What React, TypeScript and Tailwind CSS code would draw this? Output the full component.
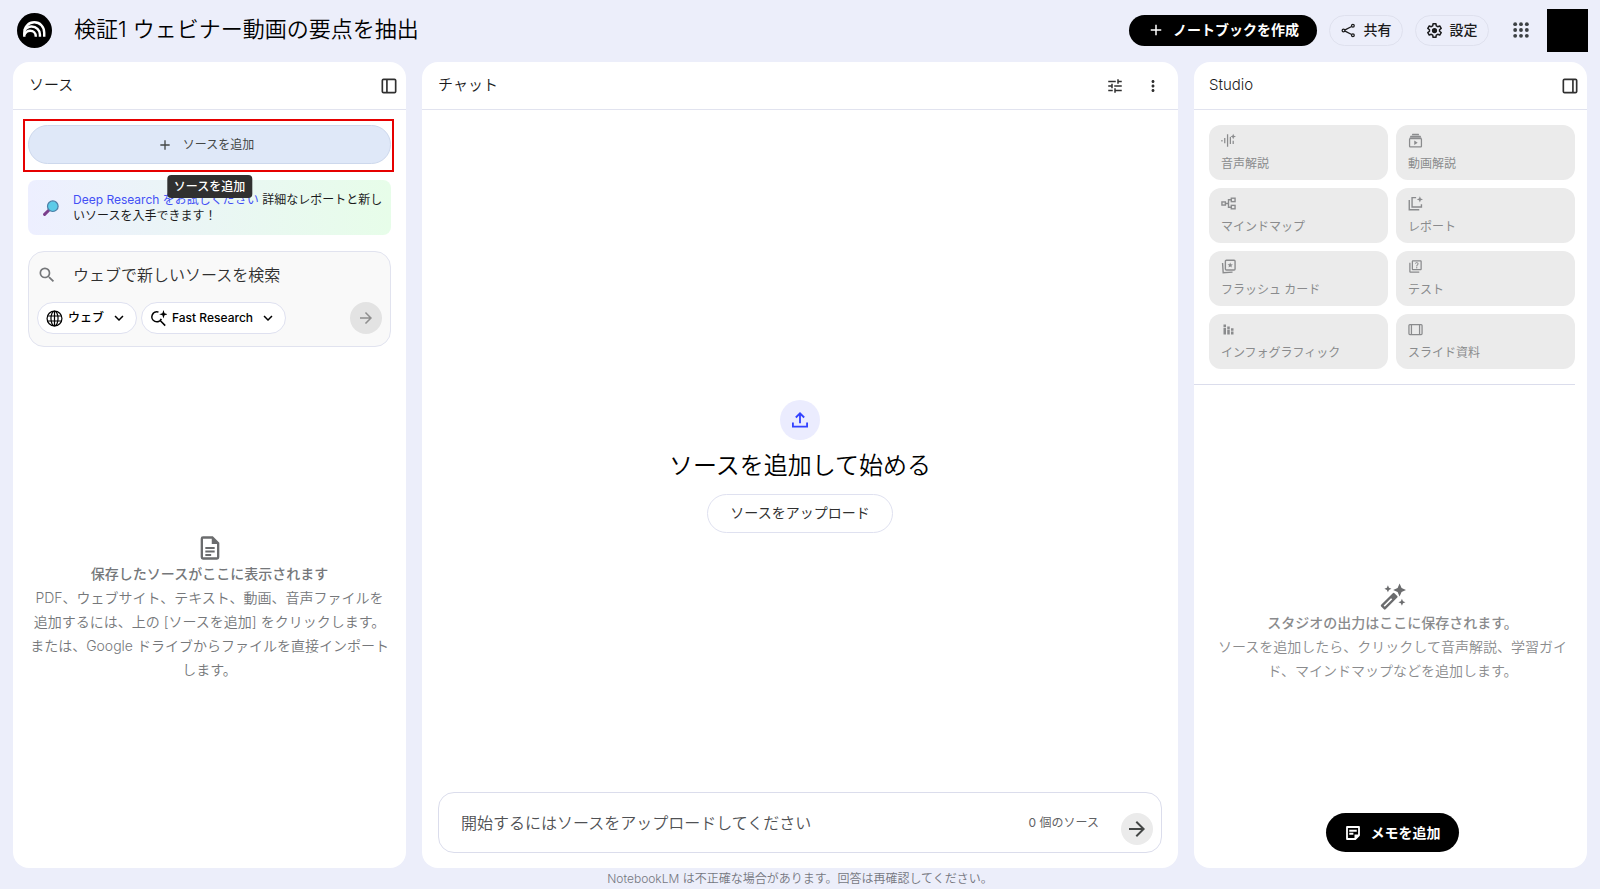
import React from 'react';
import {
  MdAdd,
  MdArrowForward,
  MdKeyboardArrowDown,
  MdMoreVert,
  MdOutlineQuiz,
  MdSearch,
  MdStackedBarChart,
  MdTune,
} from 'react-icons/md';

type IconProps = { className?: string };

const Logo: React.FC<IconProps> = ({ className }) => (
  <svg viewBox="0 0 36 36" className={className} aria-hidden="true">
    <circle cx="18" cy="18" r="18" fill="#000" />
    <g fill="none" stroke="#fff" strokeWidth="2.500">
      <path d="M7.500 24.500v-4.200C7.500 14 12 9.600 17.800 9.600S28 14 28 20.300v4.200" />
      <path d="M7.600 18.200C9.400 15.300 12.200 13.900 15 13.900c4.800 0 8.600 3.600 8.600 8.200v2.400" />
      <path d="M7.500 22.400c1.200-2.700 3.500-4.200 6-4.200 3.400 0 5.800 2.500 5.800 5.700v.6" />
    </g>
  </svg>
);

const ShareIcon: React.FC<IconProps> = ({ className }) => (
  <svg viewBox="0 0 24 24" className={className} fill="none" stroke="currentColor" strokeWidth="2" aria-hidden="true">
    <path d="M6.500 11 17 5.500M6.500 13 17 18.500" />
    <circle cx="19" cy="4.500" r="2.200" />
    <circle cx="4" cy="12" r="2.200" />
    <circle cx="19" cy="19.500" r="2.200" />
  </svg>
);

const SettingsIcon: React.FC<IconProps> = ({ className }) => (
  <svg viewBox="2 2 20 20" className={className} fill="none" stroke="currentColor" strokeWidth="2" strokeLinejoin="round" aria-hidden="true">
    <path d="M10.100 3h3.800l.5 2.800 1.900 1.100 2.700-1 1.900 3.300-2.200 1.800v2l2.200 1.800-1.900 3.300-2.700-1-1.900 1.100-.5 2.800h-3.800l-.5-2.800-1.900-1.100-2.700 1-1.900-3.300L5.300 13v-2L3.100 9.200 5 5.900l2.700 1 1.900-1.100z" />
    <circle cx="12" cy="12" r="2.500" fill="currentColor" />
  </svg>
);

const AppsIcon: React.FC<IconProps> = ({ className }) => (
  <svg viewBox="0 0 24 24" className={className} fill="currentColor" aria-hidden="true">
    {[5, 12, 19].map((y) => [5, 12, 19].map((x) => <circle key={`${x}-${y}`} cx={x} cy={y} r="2.300" />))}
  </svg>
);

const DockLeftIcon: React.FC<IconProps> = ({ className }) => (
  <svg viewBox="0 0 24 24" className={className} fill="none" stroke="currentColor" strokeWidth="2" aria-hidden="true">
    <rect x="4" y="4" width="16" height="16" rx="1.500" />
    <path d="M9.500 4v16" />
  </svg>
);

const DockRightIcon: React.FC<IconProps> = ({ className }) => (
  <svg viewBox="0 0 24 24" className={className} fill="none" stroke="currentColor" strokeWidth="2" aria-hidden="true">
    <rect x="4" y="4" width="16" height="16" rx="1.500" />
    <path d="M15.500 4v16" />
  </svg>
);

const LensIcon: React.FC<IconProps> = ({ className }) => (
  <svg viewBox="0 0 16 16" className={className} aria-hidden="true">
    <path d="M1.600 14.400 5.800 10.200" stroke="#7b3f8c" strokeWidth="3" strokeLinecap="round" />
    <circle cx="9.800" cy="6.200" r="5.300" fill="#5ccbe8" stroke="#4c7ea6" strokeWidth="1.200" />
  </svg>
);

const GlobeIcon: React.FC<IconProps> = ({ className }) => (
  <svg viewBox="0 0 24 24" className={className} fill="none" stroke="currentColor" strokeWidth="1.700" aria-hidden="true">
    <circle cx="12" cy="12" r="10.500" />
    <ellipse cx="12" cy="12" rx="5" ry="10.500" />
    <path d="M12 1.500v21M2.500 8.500h19M2.500 15.500h19" />
  </svg>
);

const SearchSparkIcon: React.FC<IconProps> = ({ className }) => (
  <svg viewBox="0 0 24 24" className={className} fill="none" stroke="currentColor" strokeWidth="2.200" aria-hidden="true">
    <path d="M12 3A7 7 0 1 0 16 12.500M14 14.500l7.500 7.500" />
    <path d="m19 0 1.500 4.500L25 6l-4.500 1.500L19 12l-1.500-4.500L13 6l4.500-1.500z" fill="currentColor" stroke="none" />
  </svg>
);

const FileIcon: React.FC<IconProps> = ({ className }) => (
  <svg viewBox="0 0 24 24" className={className} fill="none" stroke="currentColor" strokeWidth="2" aria-hidden="true">
    <path d="M14 3H6a1 1 0 0 0-1 1v16a1 1 0 0 0 1 1h12a1 1 0 0 0 1-1V8z" />
    <path d="M13.500 3v5.500H19z" fill="currentColor" stroke="none" />
    <path d="M8 12h8M8 15h8M8 18h5" strokeWidth="1.600" />
  </svg>
);

const UploadIcon: React.FC<IconProps> = ({ className }) => (
  <svg viewBox="0 0 24 24" className={className} fill="none" stroke="currentColor" strokeWidth="2.200" aria-hidden="true">
    <path d="M12 16V4.500M7 9l5-5 5 5M3.500 15v5h17v-5" />
  </svg>
);

const WandIcon: React.FC<IconProps> = ({ className }) => (
  <svg viewBox="0 0 24 24" className={className} fill="currentColor" aria-hidden="true">
    <path d="m3.400 19.400 10-10 2.400 2.400-10 10z" fill="none" stroke="currentColor" strokeWidth="2" strokeLinejoin="round" />
    <path d="m10.500 12.300 3.100-3.100 2.200 2.200-3.100 3.100z" />
    <path d="m18.500.5 1.700 3.800L24 6l-3.800 1.700-1.700 3.800-1.700-3.800L13 6l3.800-1.700z" />
    <path d="m8.500 2 .9 2.100 2.100.9-2.100.9-.9 2.100-.9-2.100L5.500 5l2.100-.9zM20.500 13.500l.9 2.100 2.100.9-2.100.9-.9 2.100-.9-2.100-2.100-.9 2.100-.9z" />
  </svg>
);

const NoteIcon: React.FC<IconProps> = ({ className }) => (
  <svg viewBox="0 0 24 24" className={className} fill="none" stroke="currentColor" strokeWidth="2.400" aria-hidden="true">
    <path d="M4 4h16v11l-5 5H4z" strokeLinejoin="round" />
    <path d="M7 9h10M7 13h5.500" />
    <path d="M14 21v-7h7z" fill="currentColor" stroke="none" />
  </svg>
);

const AudioIcon: React.FC<IconProps> = ({ className }) => (
  <svg viewBox="0 0 24 24" className={className} fill="none" stroke="currentColor" strokeWidth="2" aria-hidden="true">
    <path d="M1.500 11v2.500M6 8v8.500M10.500 2v20M15 6.500v11M19.500 12.500v5" />
    <path d="m19.500 1 1.300 3.200L24 5.500l-3.200 1.300-1.300 3.200-1.300-3.200L15 5.500l3.200-1.300z" fill="currentColor" stroke="none" />
  </svg>
);

const VideoIcon: React.FC<IconProps> = ({ className }) => (
  <svg viewBox="0 0 24 24" className={className} fill="none" stroke="currentColor" strokeWidth="2" aria-hidden="true">
    <rect x="2.500" y="9" width="19" height="13" rx="1" />
    <path d="M7 1h10l1 2.500H6zM4 4.500h16l1.500 3h-19zM10 12v7l5.500-3.500z" fill="currentColor" stroke="none" />
  </svg>
);

const MindMapIcon: React.FC<IconProps> = ({ className }) => (
  <svg viewBox="0 0 24 24" className={className} fill="none" stroke="currentColor" strokeWidth="2.200" aria-hidden="true">
    <rect x="1.500" y="9.500" width="5.500" height="5" />
    <rect x="16.500" y="3.500" width="6" height="5.500" />
    <rect x="16.500" y="15" width="6" height="5.500" />
    <path d="M7 12h5M16.500 6H12v12h4.500" />
  </svg>
);

const ReportIcon: React.FC<IconProps> = ({ className }) => (
  <svg viewBox="0 0 24 24" className={className} fill="none" stroke="currentColor" strokeWidth="2.200" aria-hidden="true">
    <path d="M13 2.500H6.500v15h15V13M2 6.500V22h16" />
    <path d="m19 .5 1.400 3.600L24 5.500l-3.600 1.400L19 10.500l-1.400-3.600L14 5.500l3.600-1.400z" fill="currentColor" stroke="none" />
  </svg>
);

const CardsIcon: React.FC<IconProps> = ({ className }) => (
  <svg viewBox="0 0 24 24" className={className} fill="none" stroke="currentColor" strokeWidth="2.200" aria-hidden="true">
    <rect x="7" y="2" width="15.500" height="15.500" rx="1.500" />
    <path d="m2.500 6.500 1 15.500 15-1" />
    <path d="m14.700 5.500 1.200 2.900 3.100.2-2.400 2 .8 3.100-2.700-1.700-2.700 1.700.8-3.100-2.400-2 3.100-.2z" fill="currentColor" stroke="none" />
  </svg>
);

const SlidesIcon: React.FC<IconProps> = ({ className }) => (
  <svg viewBox="0 0 24 24" className={className} fill="none" stroke="currentColor" strokeWidth="2" aria-hidden="true">
    <rect x="1.500" y="4" width="21" height="16" rx="1.500" />
    <path d="M5.500 4v16M18.500 4v16" />
  </svg>
);

const studioItems = [
  { label: '音声解説', icon: AudioIcon },
  { label: '動画解説', icon: VideoIcon },
  { label: 'マインドマップ', icon: MindMapIcon },
  { label: 'レポート', icon: ReportIcon },
  { label: 'フラッシュ カード', icon: CardsIcon },
  { label: 'テスト', icon: MdOutlineQuiz },
  { label: 'インフォグラフィック', icon: MdStackedBarChart },
  { label: 'スライド資料', icon: SlidesIcon },
];

const Header: React.FC = () => (
  <header className="flex h-[62px] shrink-0 items-center pr-3 pb-[2px] pl-[17px]">
    <a href="#" aria-label="NotebookLM" className="mr-[22px]">
      <Logo className="size-[35px]" />
    </a>
    <h1 className="pb-[2px] text-[22px] leading-8 font-[350] text-black">検証1 ウェビナー動画の要点を抽出</h1>
    <div className="ml-auto flex items-center">
      <button className="flex h-[31px] w-[188px] items-center justify-center gap-2 rounded-full bg-black text-sm font-bold text-white">
        <MdAdd className="size-[18px]" />
        ノートブックを作成
      </button>
      <button className="ml-3 flex h-[31px] w-[74px] items-center justify-center gap-2 rounded-full border border-[#dfe1ee] text-sm font-medium text-[#1b1b1c]">
        <ShareIcon className="size-[15px]" />
        共有
      </button>
      <button className="ml-3 flex h-[31px] w-[74px] items-center justify-center gap-2 rounded-full border border-[#dfe1ee] text-sm font-medium text-[#1b1b1c]">
        <SettingsIcon className="size-[15px]" />
        設定
      </button>
      <button aria-label="Google アプリ" className="ml-5 p-[2px] text-[#3c4043]">
        <AppsIcon className="size-5" />
      </button>
      <button aria-label="アカウント" className="ml-[14px] h-[43px] w-[41px] bg-black" />
    </div>
  </header>
);

const SourcePanel: React.FC = () => (
  <section className="flex min-h-0 flex-col rounded-2xl bg-white">
    <div className="flex h-12 shrink-0 items-center justify-between border-b border-[#e1e3ef] pr-[7px] pl-4">
      <h2 className="text-[15px] font-[350] text-[#1b1b1c]">ソース</h2>
      <button aria-label="ソースパネルを閉じる" className="text-[#303030]">
        <DockLeftIcon className="size-5" />
      </button>
    </div>

    <div className="flex min-h-0 flex-1 flex-col gap-4 px-[15px] pt-[15px]">
      <div className="relative">
        <button className="flex h-[39px] w-full items-center justify-center gap-[10px] rounded-full border border-[#cdd8ec] bg-[#dfe8f8] pr-2 text-xs text-[#444746]">
          <MdAdd className="size-4" />
          ソースを追加
        </button>
        <div className="pointer-events-none absolute -top-[6px] -right-[3px] -bottom-2 -left-[5px] border-2 border-[#e60000]" />
        <div role="tooltip" className="absolute top-[50px] left-1/2 z-10 flex h-[23px] -translate-x-1/2 items-center rounded bg-[#303030] px-[7px] text-xs font-medium whitespace-nowrap text-white">
          ソースを追加
        </div>
      </div>

      <div className="flex h-[55px] items-center rounded-lg bg-linear-to-r from-[#edefff] to-[#e7fde9] pl-[15px]">
        <LensIcon className="mr-[14px] size-4 shrink-0" />
        <p className="text-xs leading-4 text-[#1b1b1c]">
          <a href="#" className="text-[#4350f5]">Deep Research をお試しください</a> 詳細なレポートと新し
          <br />
          いソースを入手できます！
        </p>
      </div>

      <div className="rounded-2xl border border-[#e1e3ef] bg-[#f9f9f9] px-2 pt-2 pb-3">
        <div className="flex h-[30px] items-center gap-4">
          <MdSearch className="size-5 shrink-0 text-[#75777a]" />
          <input
            type="text"
            aria-label="ソースを検索"
            placeholder="ウェブで新しいソースを検索"
            className="w-full bg-transparent text-base font-[350] placeholder:text-[#303030] focus:outline-none"
          />
        </div>
        <div className="mt-3 flex items-center gap-1">
          <label className="flex h-8 items-center gap-[5px] rounded-full border border-[#dfe1f0] bg-white px-2 text-black">
            <GlobeIcon className="size-[17px]" />
            <select aria-label="検索対象" className="appearance-none bg-transparent text-xs font-medium focus:outline-none">
              <option>ウェブ</option>
            </select>
            <MdKeyboardArrowDown className="pointer-events-none size-[18px]" />
          </label>
          <label className="flex h-8 items-center gap-[5px] rounded-full border border-[#dfe1f0] bg-white px-2 text-black">
            <SearchSparkIcon className="size-[17px]" />
            <select aria-label="リサーチの種類" className="appearance-none bg-transparent text-xs font-medium focus:outline-none">
              <option>Fast Research</option>
            </select>
            <MdKeyboardArrowDown className="pointer-events-none size-[18px]" />
          </label>
          <button aria-label="検索" className="ml-auto flex size-8 items-center justify-center rounded-full bg-[#e3e3e3] text-[#8e8e8e]">
            <MdArrowForward className="size-[18px]" />
          </button>
        </div>
      </div>

      <div className="-mx-3 -mt-4 flex flex-1 flex-col items-center justify-center text-center text-sm leading-6 text-[#75777a]">
        <FileIcon className="size-7 text-[#6b6c6e]" />
        <p className="font-medium">保存したソースがここに表示されます</p>
        <p className="font-[350]">
          PDF、ウェブサイト、テキスト、動画、音声ファイルを
          <br />
          追加するには、上の [ソースを追加] をクリックします。
          <br />
          または、Google ドライブからファイルを直接インポート
          <br />
          します。
        </p>
      </div>
    </div>
  </section>
);

const ChatPanel: React.FC = () => (
  <section className="flex min-h-0 flex-col rounded-2xl bg-white">
    <div className="flex h-12 shrink-0 items-center border-b border-[#e1e3ef] pr-4 pl-4">
      <h2 className="text-[15px] font-[350] text-[#1b1b1c]">チャット</h2>
      <button aria-label="ノートブックを設定" className="ml-auto text-[#303030]">
        <MdTune className="size-[18px]" />
      </button>
      <button aria-label="その他" className="ml-5 text-[#303030]">
        <MdMoreVert className="size-[18px]" />
      </button>
    </div>

    <div className="flex flex-1 flex-col items-center justify-center pt-[30px]">
      <div className="flex size-10 items-center justify-center rounded-full bg-[#ebecfe] text-[#3342ff]">
        <UploadIcon className="size-5" />
      </div>
      <h3 className="mt-2 text-2xl leading-9 font-[350] text-black">ソースを追加して始める</h3>
      <button className="mt-[10px] h-[39px] w-[186px] rounded-full border border-[#dfe1f0] text-sm text-[#303030]">
        ソースをアップロード
      </button>
    </div>

    <form className="mx-4 mb-[15px] flex h-[61px] shrink-0 items-center rounded-2xl border border-[#dbddec] pr-2 pl-[22px]">
      <input
        type="text"
        disabled
        aria-label="クエリボックス"
        placeholder="開始するにはソースをアップロードしてください"
        className="min-w-0 flex-1 bg-transparent text-base font-[350] placeholder:text-[#4f5154]"
      />
      <span className="mr-[22px] text-xs text-[#5f6164]">0 個のソース</span>
      <button type="button" aria-label="送信" className="mt-3 flex size-8 items-center justify-center rounded-full bg-[#ebebeb] text-[#444746]">
        <MdArrowForward className="size-6" />
      </button>
    </form>
  </section>
);

const StudioPanel: React.FC = () => (
  <section className="relative flex min-h-0 flex-col rounded-2xl bg-white">
    <div className="flex h-12 shrink-0 items-center justify-between border-b border-[#e1e3ef] pr-[7px] pl-[15px]">
      <h2 className="text-[15px] font-[350] text-[#1b1b1c]">Studio</h2>
      <button aria-label="Studio パネルを閉じる" className="text-[#303030]">
        <DockRightIcon className="size-5" />
      </button>
    </div>

    <div className="mr-3 grid grid-cols-2 gap-2 border-b border-[#dbddec] pt-[15px] pb-[15px] pl-[15px]">
      {studioItems.map(({ label, icon: Icon }) => (
        <button key={label} className="flex h-[55px] flex-col items-start justify-between rounded-xl bg-[#ebebeb] px-3 pt-2 pb-2 text-xs text-[#8a8b8d]">
          <Icon className="size-[15px]" />
          {label}
        </button>
      ))}
    </div>

    <div className="flex flex-1 flex-col items-center justify-center pt-3 pr-3 pl-4 text-center text-sm leading-6 text-[#8a8b8d]">
      <WandIcon className="size-7 text-[#6b6c6e]" />
      <p className="font-medium">スタジオの出力はここに保存されます。</p>
      <p className="font-[350]">
        ソースを追加したら、クリックして音声解説、学習ガイ
        <br />
        ド、マインドマップなどを追加します。
      </p>
    </div>

    {/* 空の状態の上に浮かぶメモ追加ボタン */}
    <div className="absolute inset-x-0 bottom-4 flex justify-center pl-1">
      <button className="flex h-[39px] w-[133px] items-center justify-center gap-2 rounded-full bg-black text-sm font-bold text-white">
        <NoteIcon className="size-[18px]" />
        メモを追加
      </button>
    </div>
  </section>
);

const App: React.FC = () => {
  return (
    <div className="flex h-screen flex-col bg-[#eceefa] font-[Inter,'Noto_Sans_CJK_JP',sans-serif]">
      <Header />
      <main className="grid min-h-0 flex-1 grid-cols-[13fr_25fr_13fr] gap-4 px-[13px]">
        <SourcePanel />
        <ChatPanel />
        <StudioPanel />
      </main>
      <footer className="h-[21px] shrink-0 text-center text-xs leading-[21px] font-[350] text-[#75777f]">
        NotebookLM は不正確な場合があります。回答は再確認してください。
      </footer>
    </div>
  );
};

export default App;
